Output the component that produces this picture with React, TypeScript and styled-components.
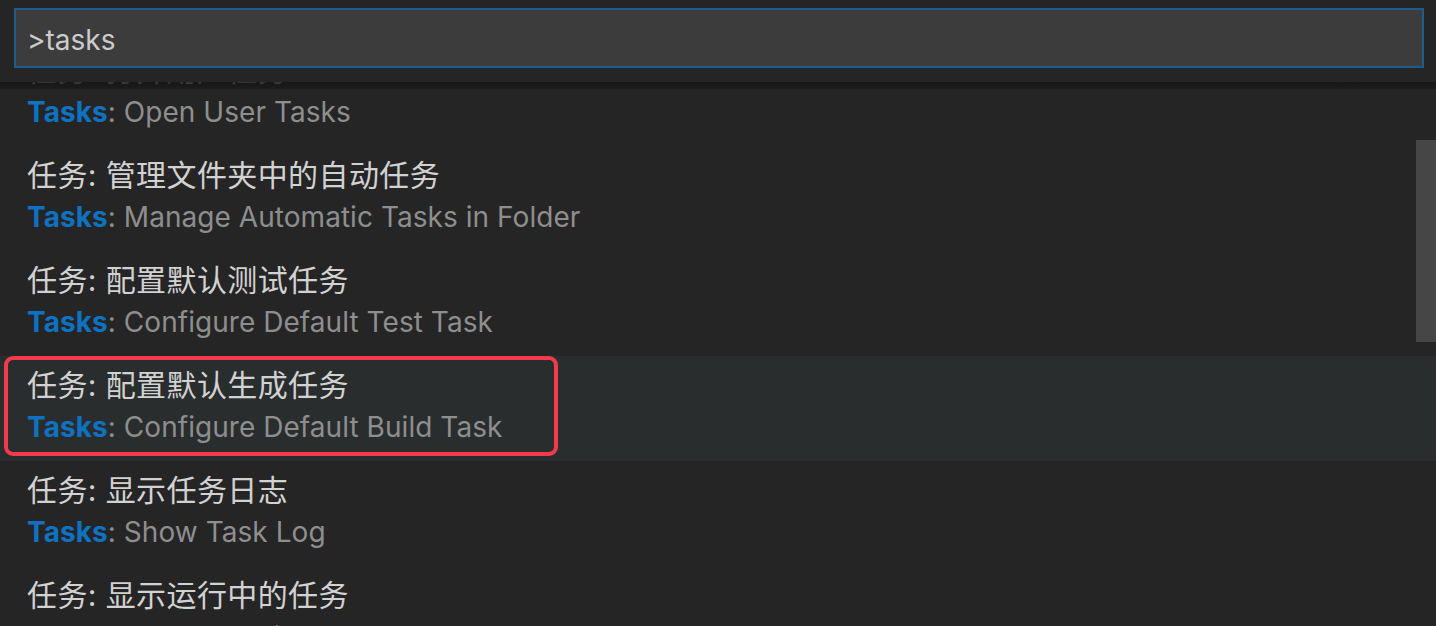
import React, { useLayoutEffect, useRef } from "react";
import styled, { createGlobalStyle } from "styled-components";

const GlobalStyle = createGlobalStyle`
  html, body {
    margin: 0;
    padding: 0;
    background: #252526;
    overflow: hidden;
  }
  * { box-sizing: border-box; }
`;

const FONT = `Inter, "Noto Sans CJK SC", sans-serif`;

const Palette = styled.div`
  position: relative;
  width: 1436px;
  height: 626px;
  background: #252526;
  font-family: ${FONT};
  display: flex;
  flex-direction: column;
  overflow: hidden;
`;

const Header = styled.div`
  position: relative;
  z-index: 2;
  height: 82px;
  flex: none;
  padding: 8px 12px 0 14px;
  background: #252526;
  &::after {
    content: "";
    position: absolute;
    left: 0;
    right: 0;
    top: 82px;
    height: 8px;
    background: linear-gradient(to bottom, rgba(20,20,20,0.85), rgba(20,20,20,0.6) 70%, rgba(20,20,20,0));
    pointer-events: none;
  }
`;

const Input = styled.div`
  height: 60px;
  border: 2px solid #1d5c8c;
  background: #3c3c3c;
  color: #cccccc;
  font-size: 28px;
  line-height: 56px;
  padding: 2px 0 0 11px;
`;

const Viewport = styled.div`
  position: relative;
  flex: 1;
  overflow: hidden;
`;

const List = styled.div`
  height: 100%;
  overflow: hidden;
`;

const Row = styled.div<{ $selected?: boolean }>`
  height: 105px;
  padding: 5px 46px 12px 27px;
  background: ${(p) => (p.$selected ? "#2a2d2e" : "transparent")};
  display: grid;
  grid-template-rows: 44px 44px;
`;

const LabelLine = styled.div`
  display: flex;
  align-items: center;
  justify-content: space-between;
  color: #d2d2d2;
  font-size: 30px;
  letter-spacing: 0.4px;
  white-space: nowrap;
`;

const Recent = styled.span`
  color: #3794ff;
  font-size: 28px;
`;

const DetailLine = styled.div`
  display: flex;
  align-items: center;
  color: #8e8e8e;
  font-size: 28px;
  letter-spacing: 0.05px;
  white-space: pre;
`;

const Match = styled.span`
  color: #0e72c0;
  font-weight: 700;
`;

const Thumb = styled.div`
  position: absolute;
  right: 0;
  top: 58px;
  width: 20px;
  height: 202px;
  background: #464646;
`;

const Highlight = styled.div`
  position: absolute;
  left: 4px;
  top: 356px;
  width: 554px;
  height: 100px;
  border: 4px solid #f23a4c;
  border-radius: 9px;
  pointer-events: none;
  z-index: 3;
`;

type Item = { zh: string; en: string; recent?: boolean; selected?: boolean };

const items: Item[] = [
  { zh: "任务: 打开用户任务", en: "Open User Tasks", recent: true },
  { zh: "任务: 管理文件夹中的自动任务", en: "Manage Automatic Tasks in Folder" },
  { zh: "任务: 配置默认测试任务", en: "Configure Default Test Task" },
  { zh: "任务: 配置默认生成任务", en: "Configure Default Build Task", selected: true },
  { zh: "任务: 显示任务日志", en: "Show Task Log" },
  { zh: "任务: 显示运行中的任务", en: "Show Running Tasks" },
];

export default function App() {
  const listRef = useRef<HTMLDivElement>(null);
  useLayoutEffect(() => {
    if (listRef.current) listRef.current.scrollTop = 41;
  }, []);
  return (
    <>
      <GlobalStyle />
      <Palette>
        <Header>
          <Input>&gt;tasks</Input>
        </Header>
        <Viewport>
          <List ref={listRef}>
            {items.map((it) => (
              <Row key={it.en} $selected={it.selected}>
                <LabelLine>
                  <span>{it.zh}</span>
                  {it.recent && <Recent>最近使用</Recent>}
                </LabelLine>
                <DetailLine>
                  <Match>Tasks</Match>: {it.en}
                </DetailLine>
              </Row>
            ))}
          </List>
          <Thumb />
        </Viewport>
        <Highlight />
      </Palette>
    </>
  );
}
